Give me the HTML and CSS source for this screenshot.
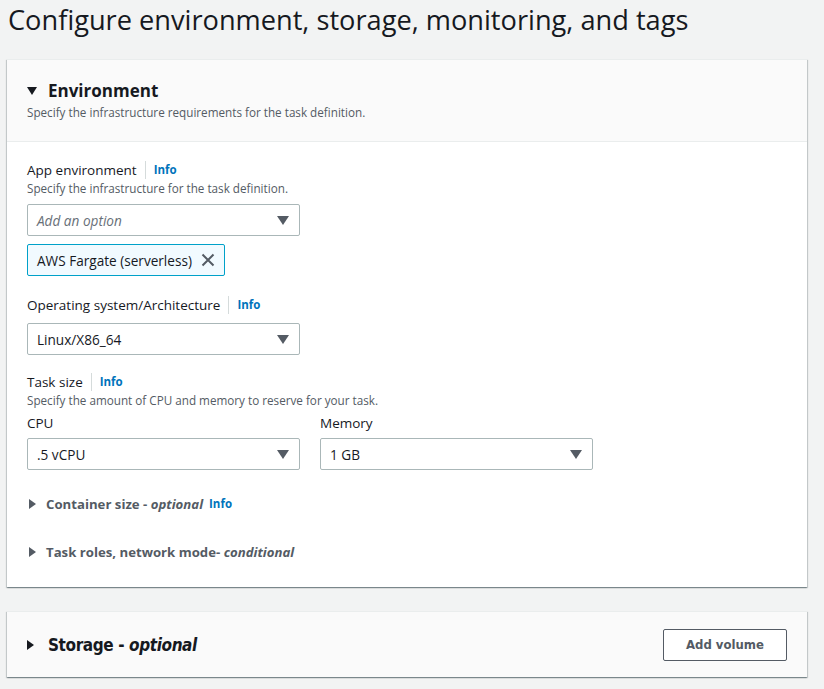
FILE: index.html
```html
<!DOCTYPE html>
<html>
<head>
<meta charset="utf-8">
<link rel="stylesheet" href="styles.css">
</head>
<body>
<h1 class="page-title">Configure environment, storage, monitoring, and tags</h1>

<section class="card">
  <div class="card-header">
    <h2 class="card-title"><span class="tri-down"></span>Environment</h2>
    <p class="card-desc">Specify the infrastructure requirements for the task definition.</p>
  </div>
  <div class="card-body">
    <div class="field f1">
      <div class="label-row"><span class="label">App environment</span><span class="info">Info</span></div>
      <div class="field-desc">Specify the infrastructure for the task definition.</div>
      <div class="select w272 mt8"><span class="placeholder">Add an option</span><span class="caret"></span></div>
      <div class="token">AWS Fargate (serverless)
        <svg class="x" width="14" height="14" viewBox="0 0 14 14"><path d="M1.5 1.5 L12.5 12.5 M12.5 1.5 L1.5 12.5" stroke="#545b64" stroke-width="2" fill="none"/></svg>
      </div>
    </div>

    <div class="field f2">
      <div class="label-row"><span class="label">Operating system/Architecture</span><span class="info">Info</span></div>
      <div class="select w272 mt9"><span class="value">Linux/X86_64</span><span class="caret"></span></div>
    </div>

    <div class="field">
      <div class="label-row"><span class="label">Task size</span><span class="info">Info</span></div>
      <div class="field-desc">Specify the amount of CPU and memory to reserve for your task.</div>
      <div class="cols">
        <div class="col">
          <div class="label sub">CPU</div>
          <div class="select"><span class="value">.5 vCPU</span><span class="caret"></span></div>
        </div>
        <div class="col">
          <div class="label sub">Memory</div>
          <div class="select"><span class="value">1 GB</span><span class="caret"></span></div>
        </div>
      </div>
    </div>

    <div class="expander first"><span class="tri-right"></span><span class="exp-title">Container size - <i>optional</i></span><span class="info plain">Info</span></div>
    <div class="expander"><span class="tri-right"></span><span class="exp-title">Task roles, network mode- <i>conditional</i></span></div>
  </div>
</section>

<section class="card storage">
  <h2 class="storage-title"><span class="tri-right big"></span>Storage - <i>optional</i></h2>
  <button class="btn">Add volume</button>
</section>
</body>
</html>
```

FILE: styles.css
```css
* { box-sizing: border-box; }
html, body { margin: 0; padding: 0; }
body {
  background: #f2f3f3;
  font-family: "Open Sans", "Noto Sans", sans-serif;
  color: #16191f;
  width: 824px;
  height: 689px;
  overflow: hidden;
}
.page-title {
  margin: 0;
  padding: 2px 0 0 8px;
  height: 59px;
  font-size: 27.2px;
  font-weight: 400;
  line-height: 36px;
  color: #16191f;
}
.card {
  margin-left: 7px;
  width: 800px;
  background: #fff;
  box-shadow: 0 1px 1px 0 rgba(0,28,36,0.3), 1px 1px 1px 0 rgba(0,28,36,0.15), -1px 1px 1px 0 rgba(0,28,36,0.15);
  border-top: 1px solid #eaeded;
}
.card-header {
  background: #fafafa;
  border-bottom: 1px solid #eaeded;
  height: 82px;
  padding: 19px 20px 0 20px;
}
.card-title {
  margin: 0;
  font-size: 17px;
  font-weight: 700;
  line-height: 24px;
  display: flex;
  align-items: center;
}
.tri-down {
  width: 0; height: 0;
  border-left: 5px solid transparent;
  border-right: 5px solid transparent;
  border-top: 8px solid #16191f;
  margin: 0 11px 0 0;
}
.card-desc {
  margin: 1px 0 0 0;
  font-size: 11.7px;
  line-height: 16px;
  color: #545b64;
}
.card-body {
  padding: 19px 20px 0 20px;
  height: 445px;
}
.field { margin-bottom: 18px; }
.field.f1 { margin-bottom: 20px; }
.field.f2 { margin-bottom: 18px; }
.label-row { display: flex; align-items: center; height: 18px; }
.label { font-size: 13.5px; line-height: 18px; color: #16191f; }
.info {
  font-size: 11.5px;
  font-weight: 700;
  color: #0073bb;
  border-left: 1px solid #d5dbdb;
  margin-left: 8px;
  padding-left: 8px;
  line-height: 18px;
}
.info.plain { border-left: 0; padding-left: 0; margin-left: 6px; }
.field-desc {
  font-size: 11.7px;
  line-height: 16px;
  color: #545b64;
  margin-top: 1px;
}
.select {
  margin-top: 4px;
  height: 32px;
  border: 1px solid #aab7b8;
  border-radius: 2px;
  background: #fff;
  display: flex;
  align-items: center;
  justify-content: space-between;
  padding: 0 10px 0 9px;
  font-size: 13.6px;
}
.w272 { width: 273px; }
.mt8 { margin-top: 8px; }
.mt9 { margin-top: 9px; }
.placeholder { font-style: italic; color: #687078; }
.value { color: #16191f; }
.caret {
  width: 0; height: 0;
  border-left: 6px solid transparent;
  border-right: 6px solid transparent;
  border-top: 9px solid #545b64;
}
.token {
  margin-top: 8px;
  display: inline-flex;
  align-items: center;
  height: 32px;
  padding: 0 9px 0 9px;
  background: #f1faff;
  border: 1px solid #00a1c9;
  border-radius: 2px;
  font-size: 13.6px;
  gap: 9px;
}
.token .x { display: block; }
.cols { display: flex; gap: 20px; margin-top: 6px; }
.col { width: 273px; }
.label.sub { margin-bottom: 6px; }
.expander {
  display: flex;
  align-items: center;
  height: 18px;
  font-size: 13.2px;
  font-weight: 700;
  color: #545b64;
}
.expander.first { margin-top: 25px; }
.expander + .expander { margin-top: 30px; }
.tri-right {
  width: 0; height: 0;
  border-top: 5px solid transparent;
  border-bottom: 5px solid transparent;
  border-left: 7px solid #545b64;
  margin: 0 10px 0 2px;
}
.exp-title i { font-weight: 700; }
.storage {
  margin-top: 24px;
  height: 66px;
  background: #fafafa;
  display: flex;
  align-items: center;
  justify-content: space-between;
  padding: 0 20px 0 20px;
}
.storage-title {
  margin: 0;
  font-family: "DejaVu Sans Condensed", "DejaVu Sans", sans-serif;
  font-stretch: condensed;
  font-size: 17px;
  font-weight: 700;
  display: flex;
  align-items: center;
  color: #16191f;
  letter-spacing: -0.4px;
}
.storage-title i { margin-left: 5px; }
.tri-right.big { border-left-color: #16191f; margin: 0 14px 0 0; }
.btn {
  width: 124px;
  height: 32px;
  background: #fff;
  border: 1px solid #545b64;
  border-radius: 2px;
  font-family: "DejaVu Sans Condensed", "DejaVu Sans", sans-serif;
  font-stretch: condensed;
  font-size: 13px;
  font-weight: 700;
  color: #545b64;
}
```
